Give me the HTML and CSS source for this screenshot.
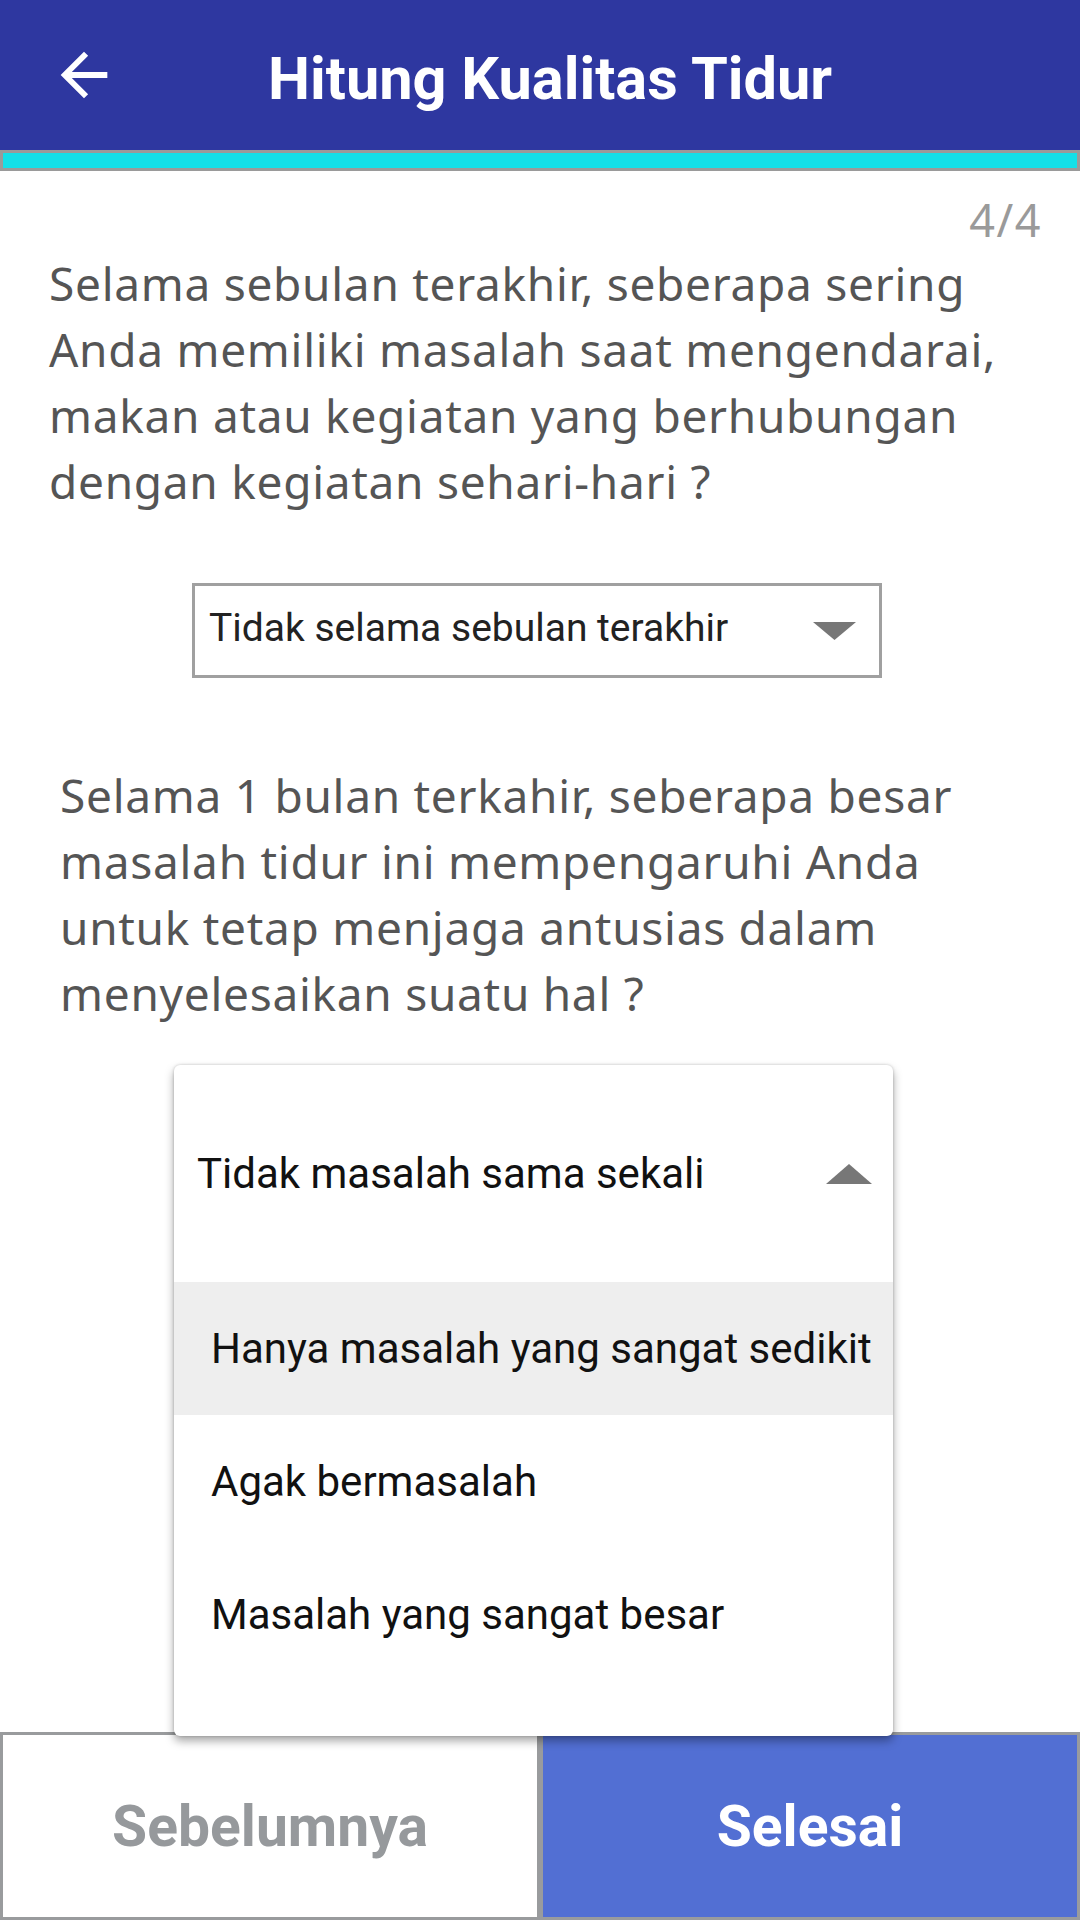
FILE: index.html
```html
<!DOCTYPE html>
<html lang="id">
<head>
<meta charset="utf-8">
<title>Hitung Kualitas Tidur</title>
<link rel="stylesheet" href="styles.css">
</head>
<body>
<header class="appbar">
  <svg class="back" viewBox="0 0 24 24" width="70" height="70" aria-hidden="true">
    <path d="M20 11H7.83l5.59-5.59L12 4l-8 8 8 8 1.41-1.41L7.83 13H20v-2z" fill="#fff"/>
  </svg>
  <h1 class="title">Hitung Kualitas Tidur</h1>
</header>
<div class="progress"></div>
<main class="content">
  <div class="counter">4/4</div>
  <p class="question q1">Selama sebulan terakhir, seberapa sering<br>Anda memiliki masalah saat mengendarai,<br>makan atau kegiatan yang berhubungan<br>dengan kegiatan sehari-hari ?</p>
  <div class="select">
    <span class="select-text">Tidak selama sebulan terakhir</span>
    <svg class="tri" viewBox="0 0 43 18" width="43" height="18" aria-hidden="true"><polygon points="0,0 43,0 21.5,18" fill="#777"/></svg>
  </div>
  <p class="question q2">Selama 1 bulan terkahir, seberapa besar<br>masalah tidur ini mempengaruhi Anda<br>untuk tetap menjaga antusias dalam<br>menyelesaikan suatu hal ?</p>
</main>
<div class="menu">
  <div class="menu-head">
    <span>Tidak masalah sama sekali</span>
    <svg class="tri" viewBox="0 0 46 20" width="46" height="20" aria-hidden="true"><polygon points="0,20 46,20 23,0" fill="#777"/></svg>
  </div>
  <div class="menu-item active">Hanya masalah yang sangat sedikit</div>
  <div class="menu-item">Agak bermasalah</div>
  <div class="menu-item">Masalah yang sangat besar</div>
</div>
<footer class="actions">
  <div class="btn btn-prev">Sebelumnya</div>
  <div class="btn btn-done">Selesai</div>
</footer>
</body>
</html>
```
FILE: styles.css
```css
* { box-sizing: border-box; }
html, body { margin: 0; padding: 0; }
body {
  width: 1080px;
  height: 1920px;
  position: relative;
  display: flex;
  flex-direction: column;
  background: #fff;
  font-family: Roboto, "Noto Sans", sans-serif;
  overflow: hidden;
}
.appbar {
  height: 150px;
  flex: 0 0 150px;
  background: #2e37a0;
  display: flex;
  align-items: center;
}
.back {
  margin-left: 49px;
  flex: 0 0 auto;
}
.title {
  margin: 0 0 0 149px;
  padding-top: 7px;
  color: #fff;
  font-family: Roboto, sans-serif;
  font-weight: 700;
  font-size: 59.5px;
  line-height: normal;
  white-space: nowrap;
}
.progress {
  flex: 0 0 21px;
  height: 21px;
  border: 3px solid #9a9a9a;
  background: #14dfe8;
}
.content {
  flex: 1 1 auto;
  display: flex;
  flex-direction: column;
  padding-top: 19px;
}
.counter {
  align-self: flex-end;
  margin-right: 38px;
  font-family: "Noto Sans", sans-serif;
  font-size: 45px;
  letter-spacing: 1.5px;
  line-height: 59px;
  color: #9a9a9a;
}
.question {
  margin: 0;
  font-family: "Noto Sans", sans-serif;
  font-size: 46px;
  letter-spacing: 0.72px;
  line-height: 66px;
  color: #555;
  white-space: nowrap;
}
.q1 { margin-left: 49px; margin-top: 1px; }
.q2 { margin-left: 60px; margin-top: 84px; }
.select {
  margin: 69px 0 0 192px;
  width: 690px;
  height: 95px;
  border: 3px solid #a0a0a0;
  display: flex;
  align-items: center;
  justify-content: space-between;
  padding: 0 23px 6px 14px;
}
.select-text {
  font-size: 39px;
  color: #222;
}
.select .tri { margin-top: 6px; }
.menu {
  position: absolute;
  left: 174px;
  top: 1065px;
  width: 719px;
  height: 671px;
  background: #fff;
  border-radius: 6px;
  box-shadow: 0 5px 10px rgba(0,0,0,0.35), 0 0 3px rgba(0,0,0,0.2);
  z-index: 2;
  padding-bottom: 55px;
  font-size: 42px;
  color: #111;
}
.menu-head {
  height: 217px;
  display: flex;
  align-items: center;
  justify-content: space-between;
  padding: 0 21px 0 23px;
}
.menu-item {
  height: 133px;
  display: flex;
  align-items: center;
  padding-left: 37px;
  white-space: nowrap;
}
.menu-item.active { background: #eeeeee; }
.actions {
  flex: 0 0 188px;
  height: 188px;
  display: flex;
}
.btn {
  flex: 1 1 0;
  border: 3px solid #999b9d;
  display: flex;
  align-items: center;
  justify-content: center;
  font-family: Roboto, sans-serif;
  font-weight: 700;
  font-size: 57px;
}
.btn-prev { background: #fff; color: #96999c; }
.btn-done { background: #526fd3; color: #fff; }
```
